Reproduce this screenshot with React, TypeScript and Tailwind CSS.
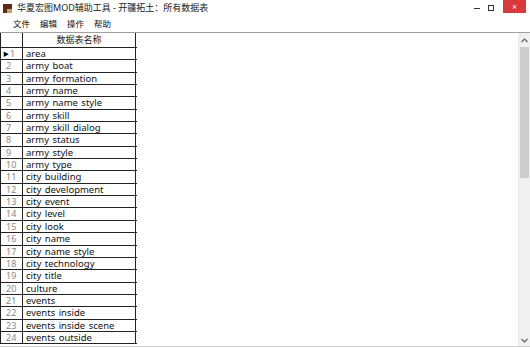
import React from "react";

const rows = [
  "area",
  "army boat",
  "army formation",
  "army name",
  "army name style",
  "army skill",
  "army skill dialog",
  "army status",
  "army style",
  "army type",
  "city building",
  "city development",
  "city event",
  "city level",
  "city look",
  "city name",
  "city name style",
  "city technology",
  "city title",
  "culture",
  "events",
  "events inside",
  "events inside scene",
  "events outside",
];

const font = { fontFamily: '"Noto Sans", "Noto Sans CJK SC", sans-serif' };

export default function App() {
  return (
    <div
      className="w-[530px] h-[348px] bg-white overflow-hidden flex flex-col text-black"
      style={font}
    >
      {/* Title bar */}
      <div className="h-[16px] flex items-center shrink-0">
        <div className="ml-[3px] w-[9px] h-[9px] bg-[#5a2a1a] flex items-end justify-end">
          <div className="w-[5px] h-[4px] bg-[#c8a070]" />
        </div>
        <div className="ml-[5px] text-[9px] leading-[16px] text-[#222]">
          华夏宏图MOD辅助工具 - 开疆拓土：所有数据表
        </div>
        <div className="flex-1" />
        <div className="w-[6px] h-[1px] bg-[#333] mr-[8px] mt-[1px]" />
        <div className="w-[6px] h-[6px] border border-[#333] mr-[9px]" />
        <div className="w-[23px] h-[13px] bg-[#d8393a] self-start mr-[4px] flex items-center justify-center text-white text-[8px] leading-none">
          ×
        </div>
      </div>
      {/* Menu bar */}
      <div className="h-[16px] flex items-center shrink-0 text-[8.5px] text-[#111]">
        <span className="ml-[13px]">文件</span>
        <span className="ml-[10px]">编辑</span>
        <span className="ml-[10px]">操作</span>
        <span className="ml-[10px]">帮助</span>
      </div>
      {/* Grid */}
      <div className="flex-1 flex border-t border-[#a0a0a0] min-h-0">
        <div className="flex-1 min-w-0 relative">
          <div className="w-[137px] border-l border-[#222]">
            <div className="h-[15px] flex border-b border-[#222]">
              <div className="w-[22px] border-r border-[#222]" />
              <div className="w-[113px] border-r border-[#222] text-center text-[9px] leading-[14px] text-[#222]">
                数据表名称
              </div>
            </div>
            {rows.map((r, i) => (
              <div key={r} className="h-[12.35px] flex border-b border-[#222]">
                <div className="w-[22px] border-r border-[#222] text-[9px] leading-[11.35px] text-[#888] flex items-center">
                  {i === 0 ? (
                    <>
                      <span className="ml-[2px] text-[6px] text-black leading-none">▶</span>
                      <span className="ml-[1px]">1</span>
                    </>
                  ) : (
                    <span className="ml-[5px]">{i + 1}</span>
                  )}
                </div>
                <div className="w-[113px] border-r border-[#222] text-[9.5px] leading-[11.35px] pl-[3px] text-[#111] whitespace-nowrap [word-spacing:1px]">
                  {r}
                </div>
              </div>
            ))}
          </div>
        </div>
        {/* Scrollbar */}
        <div className="w-[12px] bg-[#f0f0f0] flex flex-col border-l border-[#e8e8e8]">
          <div className="h-[14px] flex items-center justify-center">
            <svg width="7" height="5" viewBox="0 0 7 5">
              <path d="M0.5 4 L3.5 1 L6.5 4" fill="none" stroke="#606060" strokeWidth="1.2" />
            </svg>
          </div>
          <div className="mx-[1px] h-[131px] bg-[#cdcdcd]" />
          <div className="flex-1" />
          <div className="h-[12px] flex items-center justify-center">
            <svg width="7" height="5" viewBox="0 0 7 5">
              <path d="M0.5 1 L3.5 4 L6.5 1" fill="none" stroke="#606060" strokeWidth="1.2" />
            </svg>
          </div>
        </div>
      </div>
      <div className="h-[2px] border-t border-[#d0d0d0] shrink-0" />
    </div>
  );
}
